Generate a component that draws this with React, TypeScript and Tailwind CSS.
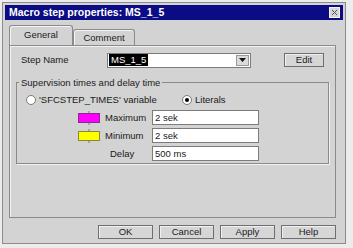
import React from "react";

const font = { fontFamily: '"Liberation Sans", Arial, sans-serif' };

function ColorBox({ fill, stroke }: { fill: string; stroke: string }) {
  return (
    <svg width="24" height="14" viewBox="0 0 24 14" className="block">
      <line x1="12" y1="0" x2="12" y2="14" stroke="#777" strokeWidth="1" />
      <rect x="1.5" y="2.5" width="21" height="9" fill={fill} stroke={stroke} strokeWidth="1" />
    </svg>
  );
}

function Btn({ label, w = "w-[55px]" }: { label: string; w?: string }) {
  return (
    <div
      className={`${w} h-[14px] border border-[#6e6e6e] bg-[#d6d6d6] flex items-center justify-center text-[9.5px] leading-none text-[#1a1a1a] shadow-[inset_1px_1px_0_#f0f0f0]`}
    >
      {label}
    </div>
  );
}

export default function App() {
  return (
    <div
      className="w-[353px] h-[248px] bg-[#ececec] pl-[2px] pt-[2px] overflow-hidden"
      style={font}
    >
      <div className="w-[344px] h-[242px] border border-[#8c8c8c] bg-[#d3d3d3] p-[2px] flex flex-col">
        {/* Title bar */}
        <div className="h-[15px] bg-[#0b0b86] flex items-center justify-between pl-[4px] pr-[3px]">
          <span className="text-white font-bold text-[10.5px] leading-none">
            Macro step properties: MS_1_5
          </span>
          <div className="w-[11px] h-[11px] bg-[#d6d6d6] border border-[#f4f4f4] flex items-center justify-center">
            <svg width="7" height="7" viewBox="0 0 7 7">
              <path d="M1 1 L6 6 M6 1 L1 6" stroke="#555" strokeWidth="1" />
            </svg>
          </div>
        </div>

        {/* Tabs */}
        <div className="ml-[4px] mt-[6px] flex items-end h-[19px]">
          <div className="relative z-10 w-[64px] h-[20px] border border-b-0 border-[#8a8a8a] bg-[#d3d3d3] rounded-t-[3px] flex items-start justify-center pt-[3px] text-[9.5px] leading-[12px] text-[#1a1a1a] shadow-[inset_1px_1px_0_#f4f4f4]">
            General
          </div>
          <div className="w-[62px] h-[16px] border border-b-0 border-[#8a8a8a] bg-[#d3d3d3] rounded-t-[3px] flex items-center justify-center text-[9.5px] leading-none text-[#1a1a1a] shadow-[inset_1px_1px_0_#f4f4f4]">
            Comment
          </div>
        </div>

        {/* Panel */}
        <div className="ml-[4px] w-[327px] h-[173px] border border-[#8a8a8a] shadow-[inset_1px_1px_0_#f2f2f2] flex flex-col pt-[7px]">
          {/* Step name row */}
          <div className="flex items-center h-[14px]">
            <div className="w-[97px] pl-[11px] text-[9.5px] leading-none text-[#1a1a1a]">
              Step Name
            </div>
            <div className="w-[144px] h-[15px] bg-white border border-[#7c7c7c] flex items-center pl-[1px] pr-[1px]">
              <span className="bg-black text-white text-[9.5px] leading-[12px] px-[2px]">
                MS_1_5
              </span>
              <div className="flex-1" />
              <div className="w-[13px] h-[11px] bg-[#dadada] border border-[#999] flex items-center justify-center">
                <svg width="7" height="4" viewBox="0 0 7 4">
                  <path d="M0 0 L7 0 L3.5 4 Z" fill="#111" />
                </svg>
              </div>
            </div>
            <div className="ml-[33px]">
              <Btn label="Edit" w="w-[40px]" />
            </div>
          </div>

          {/* Group box */}
          <fieldset className="ml-[6px] mt-[9px] w-[313px] border border-[#8a8a8a] pb-[1px] shadow-[1px_1px_0_#f2f2f2]">
            <legend className="ml-[2px] px-[2px] text-[9.5px] leading-[13px] text-[#1a1a1a]">
              Supervision times and delay time
            </legend>
            <div className="pl-[9px]">
              <div className="flex items-center h-[12px] mt-[5px]">
                <div className="w-[156px] flex items-center">
                  <div className="w-[10px] h-[10px] rounded-full bg-white border border-[#7a7a7a]" />
                  <span className="ml-[3px] text-[9.5px] leading-none text-[#1a1a1a]">
                    'SFCSTEP_TIMES' variable
                  </span>
                </div>
                <div className="w-[10px] h-[10px] rounded-full bg-white border border-[#7a7a7a] flex items-center justify-center">
                  <div className="w-[4px] h-[4px] rounded-full bg-black" />
                </div>
                <span className="ml-[3px] text-[9.5px] leading-none text-[#1a1a1a]">Literals</span>
              </div>

              <div className="flex flex-col gap-[3px] mt-[4px] mb-[1px]">
                <div className="flex items-center h-[15px]">
                  <div className="ml-[51px] w-[24px]">
                    <ColorBox fill="#ff00ff" stroke="#8a2a8a" />
                  </div>
                  <span className="ml-[4px] w-[47px] text-[9.5px] leading-none text-[#1a1a1a]">Maximum</span>
                  <div className="w-[107px] h-[15px] bg-white border border-[#7c7c7c] flex items-center pl-[2px] text-[9.5px] leading-none text-[#1a1a1a]">
                    2 sek
                  </div>
                </div>
                <div className="flex items-center h-[15px]">
                  <div className="ml-[51px] w-[24px]">
                    <ColorBox fill="#ffff00" stroke="#8a8a2a" />
                  </div>
                  <span className="ml-[4px] w-[47px] text-[9.5px] leading-none text-[#1a1a1a]">Minimum</span>
                  <div className="w-[107px] h-[15px] bg-white border border-[#7c7c7c] flex items-center pl-[2px] text-[9.5px] leading-none text-[#1a1a1a]">
                    2 sek
                  </div>
                </div>
                <div className="flex items-center h-[15px]">
                  <div className="ml-[51px] w-[24px]" />
                  <span className="ml-[9px] w-[42px] text-[9.5px] leading-none text-[#1a1a1a]">Delay</span>
                  <div className="w-[107px] h-[15px] bg-white border border-[#7c7c7c] flex items-center pl-[2px] text-[9.5px] leading-none text-[#1a1a1a]">
                    500 ms
                  </div>
                </div>
              </div>
            </div>
          </fieldset>
        </div>

        {/* Bottom buttons */}
        <div className="mt-[7px] w-[331px] flex justify-end gap-[6px]">
          <Btn label="OK" />
          <Btn label="Cancel" />
          <Btn label="Apply" />
          <Btn label="Help" />
        </div>
      </div>
    </div>
  );
}
